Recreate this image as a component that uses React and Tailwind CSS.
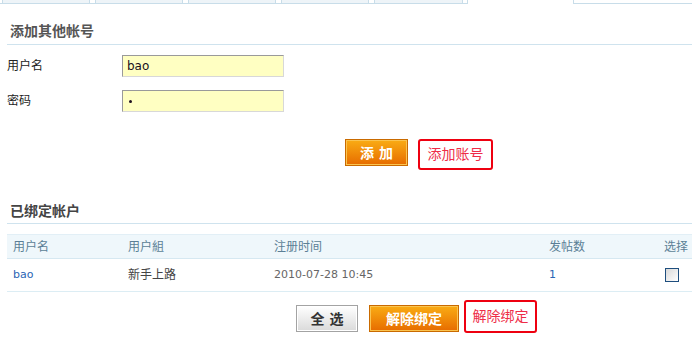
import React from 'react';

const FONT = { fontFamily: '"DejaVu Sans", "Noto Sans CJK SC", sans-serif' };

const Tabs = () => (
  <div className="flex h-[4px] border-b border-[#c8dde9]">
    <div className="ml-[2px] w-[88px] h-[3px] bg-[#eef4f8] border-x border-[#c8dde9]" />
    <div className="ml-[5px] w-[88px] h-[3px] bg-[#eef4f8] border-x border-[#c8dde9]" />
    <div className="ml-[5px] w-[88px] h-[3px] bg-[#eef4f8] border-x border-[#c8dde9]" />
    <div className="ml-[5px] w-[88px] h-[3px] bg-[#eef4f8] border-x border-[#c8dde9]" />
    <div className="ml-[5px] w-[89px] h-[3px] bg-[#eef4f8] border-x border-[#c8dde9]" />
    <div className="ml-[4px] w-[107px] h-[4px] bg-white border-x border-[#c8dde9]" />
  </div>
);

const OrangeButton = ({ children, className }) => (
  <button
    className={`h-[27px] border border-[#c96a00] bg-gradient-to-b from-[#f9ac14] to-[#e66b00] shadow-[inset_0_0_0_1px_#fbc450] text-white text-[14px] font-bold leading-none ${className}`}
  >
    {children}
  </button>
);

const RedNote = ({ children, className }) => (
  <div
    className={`flex items-center justify-center border-2 border-[#ee0010] rounded-[3px] text-[#ee2d48] text-[14px] ${className}`}
  >
    {children}
  </div>
);

const Field = ({ label, value, className }) => (
  <div className={`flex items-center h-[22px] ${className}`}>
    <div className="w-[115px] text-[12px] text-[#222]">{label}</div>
    <div className="w-[162px] h-[22px] flex items-center pl-[4px] bg-[#ffffc2] border border-t-[#9a9a9a] border-l-[#9a9a9a] border-r-[#d8d8d8] border-b-[#d8d8d8] text-[12px] text-[#201020]">
      {value}
    </div>
  </div>
);

export default function App() {
  return (
    <div className="w-[692px] h-[364px] bg-white overflow-hidden" style={FONT}>
      <Tabs />
      <div className="pl-[7px]">
        <div className="mt-[17px] h-[24px] border-b border-[#cfe3ee] pl-[3px] leading-[20px] text-[14px] font-bold text-[#555]">
          添加其他帐号
        </div>

        <Field label="用户名" value="bao" className="mt-[10px]" />
        <Field
          label="密码"
          value={<span className="block ml-[2px] w-[3px] h-[3px] rounded-full bg-[#201020]" />}
          className="mt-[13px]"
        />

        <div className="flex items-start mt-[27px] ml-[338px]">
          <OrangeButton className="w-[63px] h-[26px]">添 加</OrangeButton>
          <RedNote className="ml-[10px] w-[75px] h-[31px]">添加账号</RedNote>
        </div>

        <div className="mt-[31px] h-[23px] border-b border-[#cfe3ee] pl-[3px] leading-[20px] text-[14px] font-bold text-[#444]">
          已绑定帐户
        </div>

        <div className="mt-[10px] grid grid-cols-[115px_146px_275px_115px_1fr]">
          <div className="h-[25px] flex items-center pl-[6px] bg-[#eff7fb] border-y border-t-[#e2eff6] border-b-[#d6e8f1] text-[12px] text-[#5b7f96]">用户名</div>
          <div className="h-[25px] flex items-center pl-[6px] bg-[#eff7fb] border-y border-t-[#e2eff6] border-b-[#d6e8f1] text-[12px] text-[#5b7f96]">用户組</div>
          <div className="h-[25px] flex items-center pl-[6px] bg-[#eff7fb] border-y border-t-[#e2eff6] border-b-[#d6e8f1] text-[12px] text-[#5b7f96]">注册时间</div>
          <div className="h-[25px] flex items-center pl-[6px] bg-[#eff7fb] border-y border-t-[#e2eff6] border-b-[#d6e8f1] text-[12px] text-[#5b7f96]">发帖数</div>
          <div className="h-[25px] flex items-center pl-[6px] bg-[#eff7fb] border-y border-t-[#e2eff6] border-b-[#d6e8f1] text-[12px] text-[#5b7f96]">选择</div>

          <div className="h-[33px] flex items-center pl-[6px] border-b border-[#dcedf4] text-[11px] text-[#2a66b4]">bao</div>
          <div className="h-[33px] flex items-center pl-[6px] border-b border-[#dcedf4] text-[12px] text-[#444]">新手上路</div>
          <div className="h-[33px] flex items-center pl-[6px] border-b border-[#dcedf4] text-[11px] text-[#666]">2010-07-28 10:45</div>
          <div className="h-[33px] flex items-center pl-[6px] border-b border-[#dcedf4] text-[11px] text-[#2a66b4]">1</div>
          <div className="h-[33px] flex items-center pl-[7px] border-b border-[#dcedf4]">
            <div className="w-[14px] h-[14px] border border-[#1e4e7e] bg-gradient-to-br from-[#d9d9d9] to-white" />
          </div>
        </div>

        <div className="flex items-start mt-[8px] ml-[289px]">
          <button className="mt-[5px] w-[62px] h-[27px] border border-[#a3a3a3] bg-gradient-to-b from-white to-[#dadada] shadow-[inset_0_0_0_1px_#ffffff] text-[#333] text-[14px] font-bold leading-none">
            全 选
          </button>
          <OrangeButton className="mt-[5px] ml-[11px] w-[90px]">解除绑定</OrangeButton>
          <RedNote className="ml-[5px] w-[73px] h-[33px]">解除绑定</RedNote>
        </div>
      </div>
    </div>
  );
}
